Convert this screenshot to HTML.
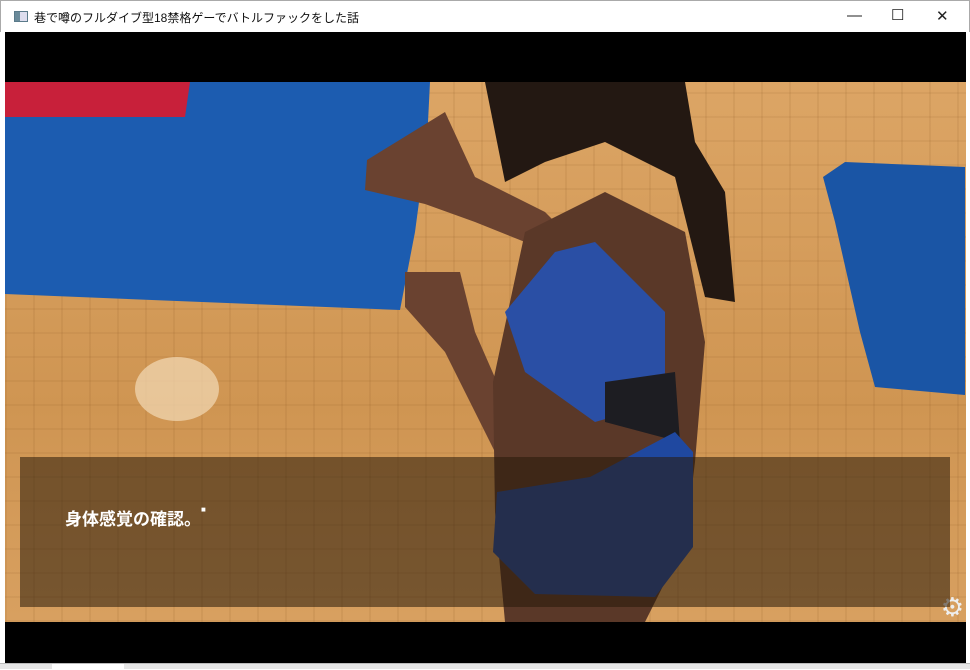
<!DOCTYPE html>
<html><head><meta charset="utf-8"><style>
*{margin:0;padding:0;box-sizing:border-box}
body{width:970px;height:669px;overflow:hidden;background:#fff;font-family:"Liberation Sans","Noto Sans CJK JP",sans-serif;position:relative}
.title{position:absolute;left:0;top:0;width:970px;height:32px;background:#fff;border:1px solid #aaa;border-bottom:none}
.title .t{position:absolute;left:33px;top:8px;font-size:12px;color:#111}
.title .ic{position:absolute;left:13px;top:10px;width:14px;height:11px;border:1px solid #5a7a8a;background:linear-gradient(90deg,#6a8a9a 0 5px,#dde 5px)}
.ctl{position:absolute;top:6px;font-size:15px;color:#222}
.blk{position:absolute;left:5px;width:961px;background:#000}
.scene{position:absolute;left:5px;top:82px;width:961px;height:540px;overflow:hidden;
background:
repeating-linear-gradient(90deg,rgba(120,70,20,.09) 0 2px,transparent 2px 28px),
repeating-linear-gradient(0deg,rgba(120,70,20,.08) 0 2px,transparent 2px 24px),
linear-gradient(180deg,#dca565,#cf9552 60%,#d8a060)}
.dlg{position:absolute;left:20px;top:457px;width:930px;height:150px;background:rgba(40,25,10,.55)}
.txt{position:absolute;left:65px;top:505px;color:#fff;font-size:17px;font-weight:bold}
.bottom{position:absolute;left:0;top:663px;width:970px;height:6px;background:#e6e6e6;border-top:1px solid #bbb}
</style></head><body>
<div class="title"><div class="ic"></div><div class="t">巷で噂のフルダイブ型18禁格ゲーでバトルファックをした話</div>
<div class="ctl" style="left:846px">—</div><div class="ctl" style="left:890px;top:5px">☐</div><div class="ctl" style="left:935px">✕</div></div>
<div class="blk" style="top:32px;height:50px"></div>
<div class="scene">
<svg width="961" height="540" viewBox="0 0 961 540" style="position:absolute;left:0;top:0">
<polygon points="0,0 425,0 422,60 410,150 395,228 0,212" fill="#1c5cb0"/>
<polygon points="0,0 185,0 180,35 0,35" fill="#c8203a"/>
<polygon points="818,95 840,80 960,85 960,313 870,305 855,250 830,140" fill="#1a55a5"/>
<ellipse cx="172" cy="307" rx="42" ry="32" fill="#f0d6b0" opacity=".75"/>
<path d="M362,78 L440,30 L470,95 L540,130 L560,150 L545,170 L470,140 L420,122 L360,108 Z" fill="#6a4230"/>
<path d="M400,190 L455,190 L470,250 L505,330 L495,380 L440,270 L400,225 Z" fill="#6a4230"/>
<path d="M520,150 L600,110 L680,150 L700,260 L690,380 L680,460 L640,540 L500,540 L490,430 L488,300 L505,220 Z" fill="#5a3828"/>
<path d="M500,230 L550,170 L590,160 L660,230 L660,320 L590,340 L520,290 Z" fill="#2a4fa5"/>
<path d="M600,300 L670,290 L675,360 L600,340 Z" fill="#1d1d22"/>
<path d="M492,410 L585,395 L670,350 L688,370 L688,465 L650,515 L530,512 L488,470 Z" fill="#1f48a0"/>
<path d="M480,0 L680,0 L690,60 L720,110 L730,220 L700,215 L670,95 L600,60 L540,80 L500,100 Z" fill="#231812"/>
</svg>
<div style="position:absolute;right:2px;bottom:2px;color:#eee;font-size:26px;line-height:1">⚙</div>
</div>
<div class="dlg"></div>
<div class="txt">身体感覚の確認。<span style="font-size:8px;vertical-align:top">■</span></div>
<div class="blk" style="top:622px;height:41px"></div>
<div class="bottom"><div style="position:absolute;left:52px;top:0;width:72px;height:6px;background:#fff"></div></div>
</body></html>
